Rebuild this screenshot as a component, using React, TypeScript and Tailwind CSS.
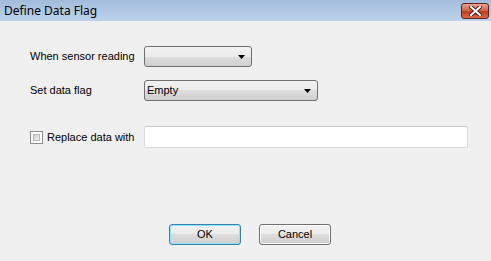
import React from 'react';

const Arrow: React.FC = () => (
  <svg width="7" height="4" viewBox="0 0 7 4" className="shrink-0">
    <path d="M0 0 H7 L3.5 4 Z" fill="#000" />
  </svg>
);

const Combo: React.FC<{ width: string; value?: string }> = ({ width, value }) => (
  <div
    className={`${width} h-[21px] flex items-center justify-between pl-[2px] pr-[6px] rounded-[3px] border border-[#707070] bg-[linear-gradient(to_bottom,#f2f2f2_0%,#ebebeb_50%,#dddddd_50%,#cfcfcf_100%)] text-[11px] text-black`}
  >
    <span>{value ?? ''}</span>
    <Arrow />
  </div>
);

const Button: React.FC<{ label: string; focused?: boolean }> = ({ label, focused }) => (
  <button
    className={`w-[72px] h-[21px] rounded-[3px] border text-[11px] text-black bg-[linear-gradient(to_bottom,#f2f2f2_0%,#ebebeb_50%,#dddddd_50%,#cfcfcf_100%)] ${
      focused ? 'border-[#3c7fb1] shadow-[inset_0_0_0_1px_#8ee4fc]' : 'border-[#707070] shadow-[inset_0_0_0_1px_#fcfcfc]'
    }`}
  >
    {label}
  </button>
);

const CloseButton: React.FC = () => (
  <div className="w-[28px] h-[16px] mt-[3px] mr-[2px] rounded-[3px] border border-[#5c2424] bg-[linear-gradient(to_bottom,#e8a493_0%,#d2664e_45%,#c13c1d_55%,#d46a4a_100%)] flex items-center justify-center">
    <svg width="13" height="10" viewBox="0 0 13 10">
      <path d="M2 1 L11 9 M11 1 L2 9" stroke="#4a2020" strokeWidth="4" strokeLinecap="square" />
      <path d="M2 1 L11 9 M11 1 L2 9" stroke="#ffffff" strokeWidth="2" strokeLinecap="square" />
    </svg>
  </div>
);

export default function App() {
  return (
    <div className="w-[491px] h-[261px] flex flex-col bg-[#f0f0f0] overflow-hidden font-['Liberation_Sans',Arial,sans-serif]">
      <header className="h-[21px] shrink-0 flex items-start justify-between bg-[linear-gradient(to_bottom,#a3bcdb,#bcd3ec)]">
        <span className="pl-[4px] pt-[3px] text-[12px] leading-[15px] text-black font-['Noto_Sans',sans-serif]">
          Define Data Flag
        </span>
        <CloseButton />
      </header>

      <main className="flex-1 flex flex-col pl-[30px] pt-[25px]">
        <div className="flex items-center h-[21px]">
          <span className="w-[114px] text-[11px] text-black">When sensor reading</span>
          <Combo width="w-[108px]" />
        </div>

        <div className="flex items-center h-[21px] mt-[13px]">
          <span className="w-[114px] text-[11px] text-black">Set data flag</span>
          <Combo width="w-[174px]" value="Empty" />
        </div>

        <div className="flex items-center h-[22px] mt-[25px]">
          <div className="w-[114px] flex items-center gap-[4px]">
            <span className="w-[13px] h-[13px] border border-[#8f8f8f] bg-white p-[2px]">
              <span className="block w-full h-full bg-[linear-gradient(135deg,#cbcbcb,#f5f5f5)] border border-[#b8b8b8]" />
            </span>
            <span className="text-[11px] text-black">Replace data with</span>
          </div>
          <div className="w-[324px] h-[22px] border border-[#dcdcdc] border-t-[#c6c6c6] bg-white rounded-[2px]" />
        </div>

        <div className="flex gap-[18px] mt-[76px] pl-[139px]">
          <Button label="OK" focused />
          <Button label="Cancel" />
        </div>
      </main>
    </div>
  );
}
